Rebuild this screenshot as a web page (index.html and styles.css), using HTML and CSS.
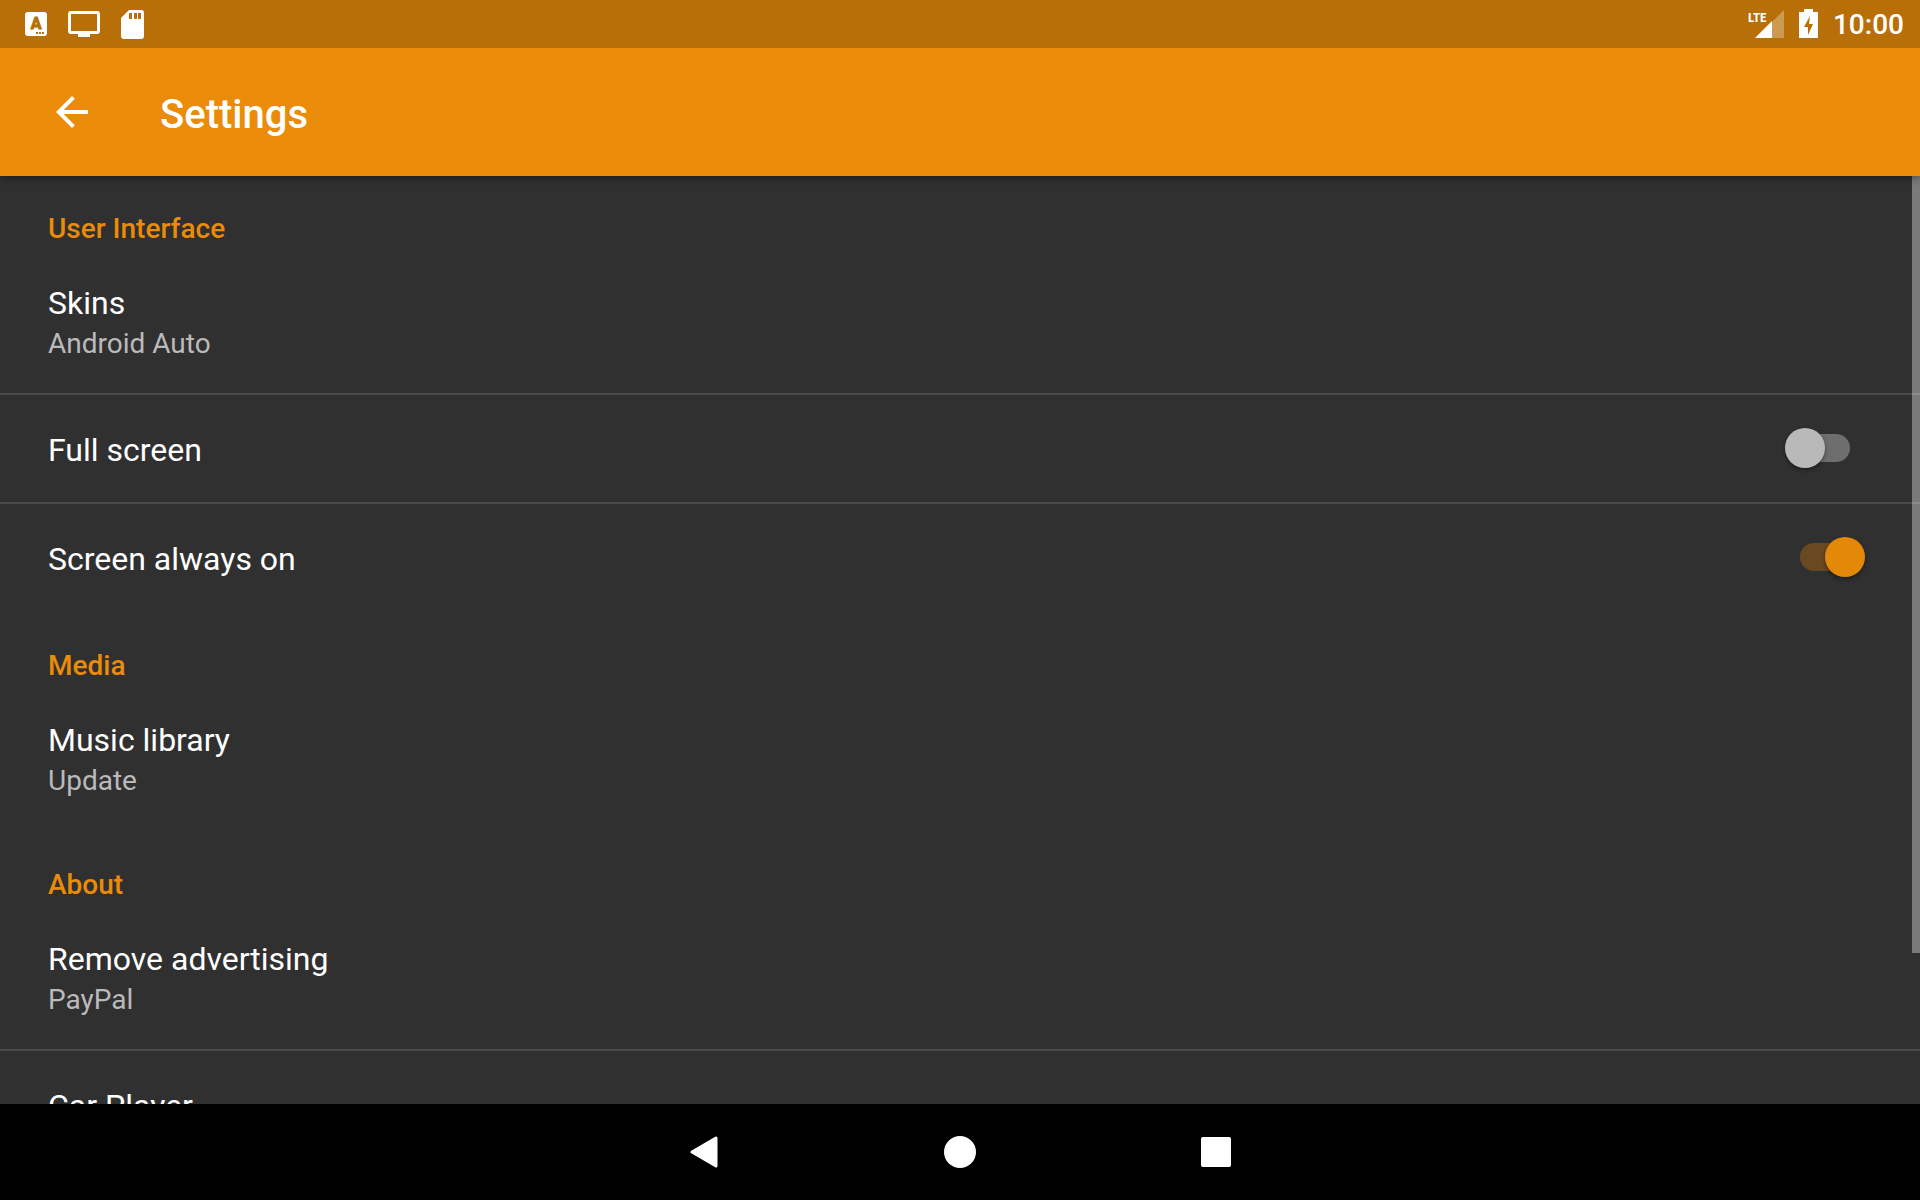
FILE: index.html
```html
<!DOCTYPE html>
<html lang="en">
<head>
<meta charset="utf-8">
<meta name="viewport" content="width=device-width, initial-scale=1">
<title>Settings</title>
<link rel="stylesheet" href="styles.css">
</head>
<body>
<div class="screen">
  <div class="status-bar">
    <div class="status-group notifications">
      <svg width="22" height="24" viewBox="0 0 22 24" aria-hidden="true">
        <rect width="22" height="24" rx="3" fill="#fff"/>
        <text class="badge-letter" x="11" y="17" text-anchor="middle">A</text>
        <path class="badge-dots" d="M11 20h2v2h-2zM14 20h2v2h-2zM17 20h2v2h-2z"/>
      </svg>
      <svg width="32" height="26" viewBox="0 0 32 26" aria-hidden="true">
        <path fill="#fff" fill-rule="evenodd" d="M3 0h26a3 3 0 0 1 3 3v17a3 3 0 0 1-3 3h-7v3H10v-3H3a3 3 0 0 1-3-3V3a3 3 0 0 1 3-3zM3 3v17h26V3z"/>
      </svg>
      <svg width="24" height="30" viewBox="0 0 24 30" aria-hidden="true">
        <path fill="#fff" fill-rule="evenodd" d="M8 1h12a3 3 0 0 1 3 3v23a3 3 0 0 1-3 3H3a3 3 0 0 1-3-3V9zM8 4v6h3V4zM13 4v6h3V4zM17 4v6h3V4z"/>
      </svg>
    </div>
    <div class="status-group system">
      <svg width="36" height="30" viewBox="0 0 36 30" role="img" aria-label="LTE signal">
        <path fill="#fff" fill-opacity=".3" d="M36 1v28H24V13z"/>
        <path fill="#fff" d="M7 29 24 12v17z"/>
        <text class="network" x="0" y="13">LTE</text>
      </svg>
      <svg width="19" height="30" viewBox="0 0 19 30" role="img" aria-label="Battery charging">
        <path fill="#fff" fill-rule="evenodd" d="M5 0h9v3h5v26H0V3h5zM11 7 5 18h4v8l5-11h-4z"/>
      </svg>
      <time class="clock">10:00</time>
    </div>
  </div>

  <header class="app-bar">
    <button class="back" type="button" aria-label="Navigate up">
      <svg width="48" height="48" viewBox="0 0 24 24" aria-hidden="true"><path fill="#fff" d="M20 11H7.83l5.59-5.59L12 4l-8 8 8 8 1.41-1.41L7.83 13H20v-2z"/></svg>
    </button>
    <h1 class="title">Settings</h1>
  </header>

  <main class="content">
    <section class="group">
      <h2 class="category">User Interface</h2>
      <button class="item" type="button"><span class="text"><span class="name">Skins</span><span class="summary">Android Auto</span></span></button>
      <label class="item"><span class="text"><span class="name">Full screen</span></span><input class="switch" type="checkbox" role="switch"></label>
      <label class="item"><span class="text"><span class="name">Screen always on</span></span><input class="switch" type="checkbox" role="switch" checked></label>
    </section>
    <section class="group">
      <h2 class="category">Media</h2>
      <button class="item" type="button"><span class="text"><span class="name">Music library</span><span class="summary">Update</span></span></button>
    </section>
    <section class="group">
      <h2 class="category">About</h2>
      <button class="item" type="button"><span class="text"><span class="name">Remove advertising</span><span class="summary">PayPal</span></span></button>
      <button class="item" type="button"><span class="text"><span class="name">Car Player</span></span></button>
    </section>
    <div class="scroll-thumb"></div>
  </main>

  <nav class="nav-bar">
    <button type="button" aria-label="Back"><svg width="32" height="32" viewBox="0 0 32 32" aria-hidden="true"><path d="M4 16 28 2v28z" fill="#fff" stroke="#fff" stroke-width="3" stroke-linejoin="round"/></svg></button>
    <button type="button" aria-label="Home"><svg width="32" height="32" viewBox="0 0 32 32" aria-hidden="true"><circle cx="16" cy="16" r="16" fill="#fff"/></svg></button>
    <button type="button" aria-label="Overview"><svg width="32" height="32" viewBox="0 0 32 32" aria-hidden="true"><rect x="1" y="1" width="30" height="30" rx="2" fill="#fff"/></svg></button>
  </nav>
</div>
</body>
</html>
```
FILE: styles.css
```css
:root {
  --accent: #ea8b09;
  --accent-dark: #b86f08;
  --surface: #303030;
}

* { box-sizing: border-box; }

body {
  margin: 0;
  background: #000;
  color: #fff;
  font-family: Roboto, "Noto Sans", sans-serif;
}

button {
  border: 0;
  padding: 0;
  background: none;
  color: inherit;
  font: inherit;
  text-align: left;
  cursor: pointer;
}

svg { display: block; }

.screen {
  display: flex;
  flex-direction: column;
  height: 100vh;
}

.status-bar {
  display: flex;
  justify-content: space-between;
  align-items: center;
  flex: none;
  position: relative;
  z-index: 2;
  height: 48px;
  padding: 0 16px 0 25px;
  background: var(--accent-dark);
}

.status-group {
  display: flex;
  align-items: center;
}

.notifications { gap: 21px; }
.system { gap: 15px; }

.badge-letter {
  fill: var(--accent-dark);
  stroke: var(--accent-dark);
  font-size: 16px;
  font-weight: 700;
}

.badge-dots { fill: var(--accent-dark); }

.network {
  fill: #fff;
  font-family: "Roboto Condensed", "Liberation Sans Narrow", Roboto, sans-serif;
  font-size: 13px;
  font-weight: 700;
}

.clock {
  font-size: 28px;
  line-height: 32px;
  font-weight: 500;
  padding-top: 2px;
}

.app-bar {
  display: flex;
  align-items: center;
  gap: 64px;
  flex: none;
  height: 128px;
  padding: 0 48px;
  background: var(--accent);
  box-shadow: 0 2px 8px rgba(0, 0, 0, .4);
  z-index: 1;
}

.title {
  margin: 0;
  padding-top: 6px;
  font-size: 40px;
  line-height: 48px;
  font-weight: 500;
}

.content {
  position: relative;
  flex: 1;
  min-height: 0;
  overflow: hidden;
  background: var(--surface);
}

.group + .group { margin-top: 2px; }

.category {
  margin: 0;
  padding: 34px 48px 0;
  color: var(--accent);
  font-size: 28px;
  line-height: 38px;
  font-weight: 500;
}

.item {
  display: flex;
  justify-content: space-between;
  width: 100%;
  padding: 0 55px 0 48px;
  cursor: pointer;
}

.item + .item { border-top: 2px solid #4a4a4a; }

.text {
  display: flex;
  flex-direction: column;
  padding: 34px 0 31px;
}

.name {
  font-size: 32px;
  line-height: 42px;
}

.summary {
  padding-top: 2px;
  color: #bababa;
  font-size: 28px;
  line-height: 36px;
}

.switch {
  appearance: none;
  position: relative;
  width: 80px;
  height: 40px;
  margin: 33px 0 0;
  cursor: pointer;
}

.switch::before {
  content: "";
  position: absolute;
  inset: 6px 15px;
  border-radius: 14px;
  background: #6e6e6e;
}

.switch::after {
  content: "";
  position: absolute;
  top: 0;
  left: 0;
  width: 40px;
  height: 40px;
  border-radius: 50%;
  background: #b9b9b9;
  box-shadow: 0 2px 4px rgba(0, 0, 0, .4);
}

.switch:checked::before { background: #684921; }

.switch:checked::after {
  left: 40px;
  background: #e48808;
}

.scroll-thumb {
  position: absolute;
  top: 0;
  right: 0;
  width: 8px;
  height: 84%;
  max-height: 777px;
  background: rgba(255, 255, 255, .36);
}

.nav-bar {
  display: flex;
  justify-content: center;
  gap: 160px;
  flex: none;
  height: 96px;
  background: #000;
}

.nav-bar button {
  display: grid;
  place-items: center;
  width: 96px;
}
```
